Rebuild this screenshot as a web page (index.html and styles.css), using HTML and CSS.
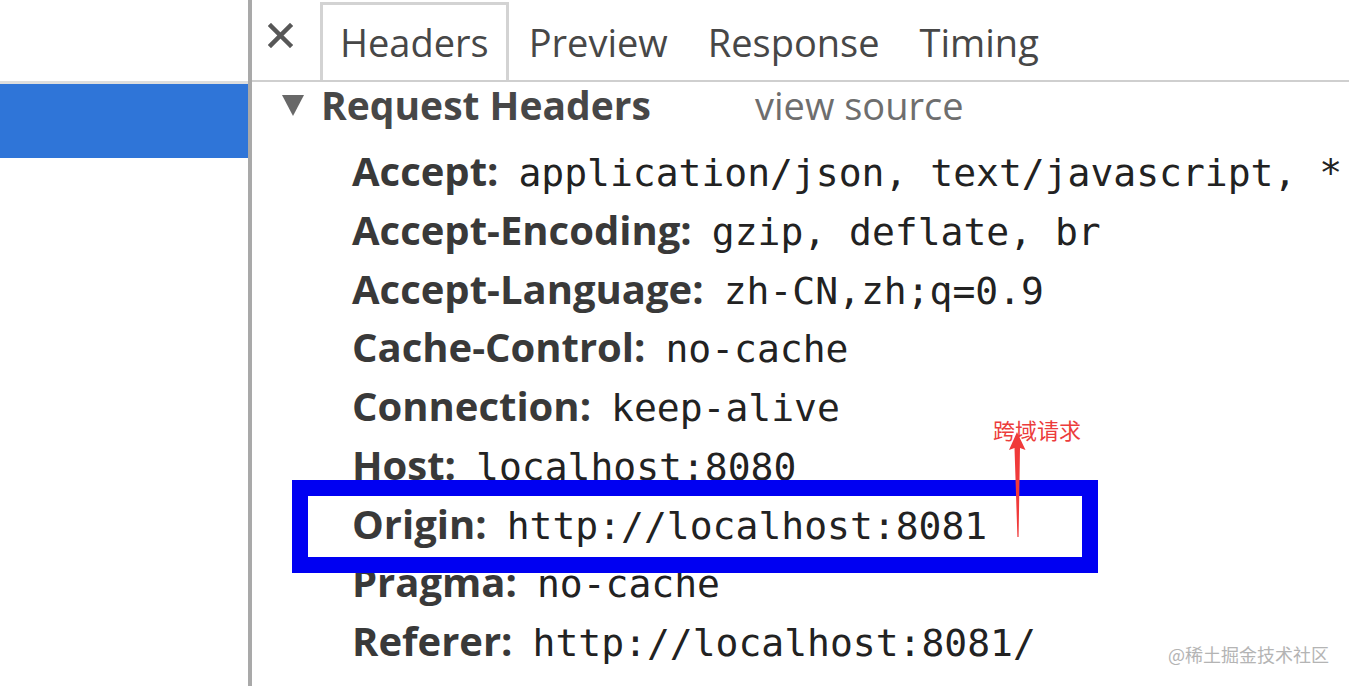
FILE: index.html
```html
<!DOCTYPE html>
<html lang="en">
<head>
<meta charset="utf-8">
<title>Request Headers</title>
<link rel="stylesheet" href="styles.css">
</head>
<body>
<div class="page">
  <aside class="sidebar">
    <div class="sidebar-top"></div>
    <div class="sidebar-selected"></div>
  </aside>
  <main class="main">
    <div class="tabbar">
      <svg class="close" viewBox="0 0 25 25" width="25" height="25"><path d="M3 3 L22 22 M22 3 L3 22" stroke="#575757" stroke-width="4.5" stroke-linecap="square"/></svg>
      <div class="tabs">
        <div class="tab selected">Headers</div>
        <div class="tab">Preview</div>
        <div class="tab">Response</div>
        <div class="tab">Timing</div>
      </div>
    </div>
    <section class="section">
      <div class="section-title">
        <span class="triangle"></span>
        <span class="title">Request Headers</span>
        <span class="view-source">view source</span>
      </div>
      <div class="rows">
        <div class="row"><span class="name">Accept:</span><span class="value">application/json, text/javascript, *</span></div>
        <div class="row"><span class="name">Accept-Encoding:</span><span class="value">gzip, deflate, br</span></div>
        <div class="row"><span class="name">Accept-Language:</span><span class="value">zh-CN,zh;q=0.9</span></div>
        <div class="row"><span class="name">Cache-Control:</span><span class="value">no-cache</span></div>
        <div class="row"><span class="name">Connection:</span><span class="value">keep-alive</span></div>
        <div class="row"><span class="name">Host:</span><span class="value">localhost:8080</span></div>
        <div class="row"><span class="name">Origin:</span><span class="value">http://localhost:8081</span></div>
        <div class="row"><span class="name">Pragma:</span><span class="value">no-cache</span></div>
        <div class="row"><span class="name">Referer:</span><span class="value">http://localhost:8081/</span></div>
      </div>
    </section>
  </main>
</div>
<div class="highlight-box"></div>
<svg class="arrow" width="1349" height="686" viewBox="0 0 1349 686"><polygon points="1017,432 1025.5,450 1020,448 1018.6,537 1017.4,537 1014.5,448 1009,450" fill="#f03a3a"/></svg>
<div class="note">跨域请求</div>
<div class="watermark">@稀土掘金技术社区</div>
</body>
</html>
```
FILE: styles.css
```css
html, body {
  margin: 0;
  padding: 0;
  background: #ffffff;
}
body {
  width: 1349px;
  height: 686px;
  overflow: hidden;
  position: relative;
  font-family: "Open Sans", "Noto Sans", sans-serif;
}
.page {
  display: flex;
  height: 686px;
}
.sidebar {
  width: 248px;
  flex-shrink: 0;
  border-right: 4px solid #a9a9a9;
}
.sidebar-top {
  height: 81px;
  border-bottom: 3px solid #dedede;
}
.sidebar-selected {
  height: 74px;
  background: #2f75d8;
}
.main {
  flex: 1;
  min-width: 0;
  white-space: nowrap;
  overflow: hidden;
}
.tabbar {
  height: 80px;
  border-bottom: 2px solid #cfcfcf;
  display: flex;
  align-items: flex-end;
  padding-left: 16px;
}
.close {
  align-self: flex-start;
  margin-top: 23px;
  flex-shrink: 0;
}
.tabs {
  display: flex;
  margin-left: 27px;
}
.tab {
  height: 78px;
  box-sizing: border-box;
  border: 3px solid transparent;
  border-bottom: none;
  padding: 0 17px;
  font-size: 38px;
  line-height: 75px;
  color: #474747;
}
.tab.selected {
  border-color: #d3d3d3;
}
.section {
  padding-left: 30px;
}
.section-title {
  height: 46px;
  display: flex;
  align-items: center;
  font-size: 39px;
  line-height: 46px;
}
.triangle {
  width: 0;
  height: 0;
  border-left: 11px solid transparent;
  border-right: 11px solid transparent;
  border-top: 21px solid #686868;
  margin-right: 17px;
  flex-shrink: 0;
}
.title {
  font-weight: 700;
  color: #474747;
  width: 434px;
  flex-shrink: 0;
}
.view-source {
  color: #6e6e6e;
  font-size: 38px;
}
.rows {
  padding-top: 14px;
  padding-left: 70px;
}
.row {
  height: 58.75px;
  line-height: 58.75px;
  font-size: 40px;
}
.name {
  font-weight: 700;
  color: #393939;
}
.value {
  font-family: "DejaVu Sans Mono", "Liberation Mono", monospace;
  font-size: 38px;
  color: #222222;
  margin-left: 20px;
}
.highlight-box {
  position: absolute;
  left: 292px;
  top: 480px;
  width: 806px;
  height: 93px;
  box-sizing: border-box;
  border: 16px solid #0000f2;
}
.arrow {
  position: absolute;
  left: 0;
  top: 0;
}
.note {
  position: absolute;
  left: 993px;
  top: 416px;
  font-family: "Noto Sans CJK SC", sans-serif;
  font-size: 22px;
  line-height: 26px;
  color: #ec3c3c;
}
.watermark {
  position: absolute;
  left: 1168px;
  top: 642px;
  font-family: "Noto Sans CJK SC", sans-serif;
  font-size: 18px;
  line-height: 24px;
  color: #b4b4b4;
}
```
